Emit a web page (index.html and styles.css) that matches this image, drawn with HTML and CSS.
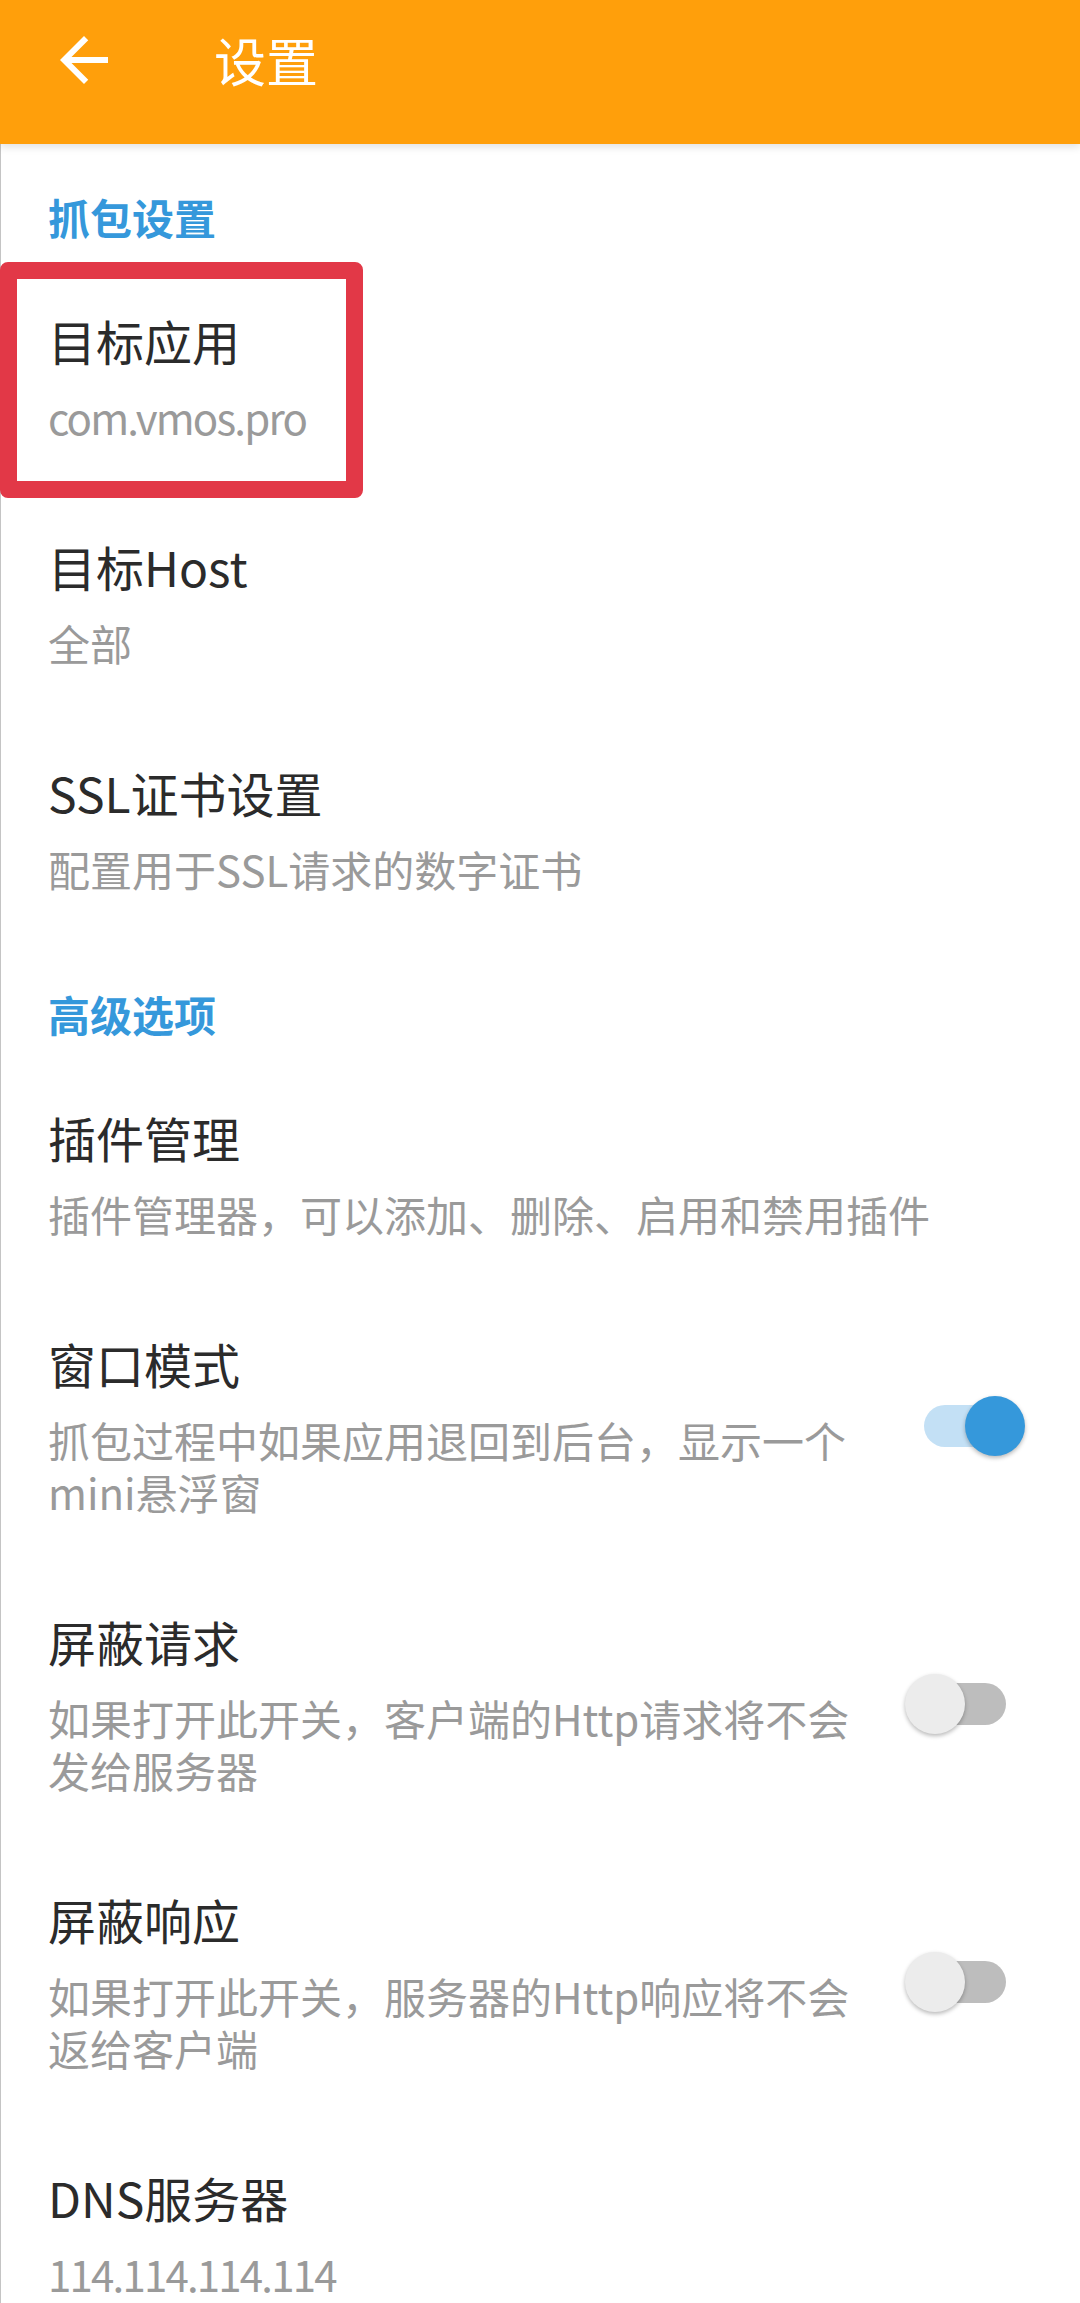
FILE: index.html
```html
<!DOCTYPE html>
<html lang="zh-CN">
<head>
    <meta charset="UTF-8">
    <meta name="viewport" content="width=device-width, initial-scale=1.0">
    <title>设置</title>
    <link rel="stylesheet" href="styles.css">
</head>
<body>

<header class="toolbar">
    <svg class="back-icon" viewBox="0 0 24 24" width="72" height="72">
        <path d="M20 11H7.83l5.59-5.59L12 4l-8 8 8 8 1.41-1.41L7.83 13H20v-2z" fill="#fff"/>
    </svg>
    <h1 class="toolbar-title">设置</h1>
</header>

<main class="prefs">
    <div class="category">抓包设置</div>

    <div class="pref marked">
        <div class="pref-text">
            <div class="pref-title">目标应用</div>
            <div class="pref-summary latin">com.vmos.pro</div>
        </div>
        <div class="mark-box"></div>
    </div>

    <div class="pref">
        <div class="pref-text">
            <div class="pref-title">目标Host</div>
            <div class="pref-summary">全部</div>
        </div>
    </div>

    <div class="pref">
        <div class="pref-text">
            <div class="pref-title">SSL证书设置</div>
            <div class="pref-summary">配置用于SSL请求的数字证书</div>
        </div>
    </div>

    <div class="category">高级选项</div>

    <div class="pref">
        <div class="pref-text">
            <div class="pref-title">插件管理</div>
            <div class="pref-summary">插件管理器，可以添加、删除、启用和禁用插件</div>
        </div>
    </div>

    <div class="pref">
        <div class="pref-text">
            <div class="pref-title">窗口模式</div>
            <div class="pref-summary">抓包过程中如果应用退回到后台，显示一个mini悬浮窗</div>
        </div>
        <div class="switch on"><span class="track"></span><span class="thumb"></span></div>
    </div>

    <div class="pref">
        <div class="pref-text">
            <div class="pref-title">屏蔽请求</div>
            <div class="pref-summary">如果打开此开关，客户端的Http请求将不会发给服务器</div>
        </div>
        <div class="switch"><span class="track"></span><span class="thumb"></span></div>
    </div>

    <div class="pref">
        <div class="pref-text">
            <div class="pref-title">屏蔽响应</div>
            <div class="pref-summary">如果打开此开关，服务器的Http响应将不会返给客户端</div>
        </div>
        <div class="switch"><span class="track"></span><span class="thumb"></span></div>
    </div>

    <div class="pref">
        <div class="pref-text">
            <div class="pref-title">DNS服务器</div>
            <div class="pref-summary latin">114.114.114.114</div>
        </div>
    </div>
</main>

</body>
</html>
```

FILE: styles.css
```css
:root {
    --primary-color: #ff9f0b;
    --accent-color: #3598db;
    --font-family: "Noto Sans CJK SC", "Noto Sans", sans-serif;
}
body {
    font-family: var(--font-family);
    background-color: #fff;
    color: #2b2b2b;
    margin: 0;
    padding: 0;
}
.toolbar {
    position: relative;
    z-index: 2;
    height: 144px;
    box-sizing: border-box;
    padding-bottom: 24px;
    display: flex;
    align-items: center;
    background-color: var(--primary-color);
    box-shadow: 0 3px 8px rgba(0, 0, 0, 0.12);
}
.back-icon {
    margin-left: 48px;
    flex-shrink: 0;
}
.toolbar-title {
    margin: 0 0 0 94px;
    font-size: 52px;
    font-weight: 400;
    line-height: 60px;
    color: #fff;
}
.prefs {
    border-left: 1px solid #c4c4c4;
    min-height: 2159px;
}
.category {
    padding: 48px 48px 21px 47px;
    font-size: 42px;
    font-weight: 700;
    line-height: 50px;
    color: var(--accent-color);
}
.pref {
    position: relative;
    display: flex;
    align-items: center;
    gap: 37px;
    padding: 47px 55px 46px 47px;
}
.pref-text {
    flex: 1;
}
.pref-title {
    font-size: 48px;
    line-height: 60px;
    color: #2b2b2b;
}
.pref-summary {
    margin-top: 21px;
    font-size: 42px;
    line-height: 52px;
    color: #9a9a9a;
}
/* device font is a bit narrower for latin-only values */
.pref-summary.latin {
    letter-spacing: -1.8px;
}
.mark-box {
    position: absolute;
    left: -1px;
    top: -1px;
    width: 363px;
    height: 236px;
    box-sizing: border-box;
    border: 17px solid #e23847;
    border-radius: 8px;
}
.switch {
    position: relative;
    width: 120px;
    height: 60px;
    flex-shrink: 0;
}
.switch .track {
    position: absolute;
    left: 19px;
    top: 9px;
    width: 82px;
    height: 42px;
    border-radius: 21px;
    background-color: #bdbdbd;
}
.switch .thumb {
    position: absolute;
    left: 0;
    top: 0;
    width: 60px;
    height: 60px;
    border-radius: 50%;
    background-color: #ececec;
    box-shadow: 0 2px 4px rgba(0, 0, 0, 0.28);
}
.switch.on .track {
    background-color: #c3e0f5;
}
.switch.on .thumb {
    left: 60px;
    background-color: var(--accent-color);
}
```
